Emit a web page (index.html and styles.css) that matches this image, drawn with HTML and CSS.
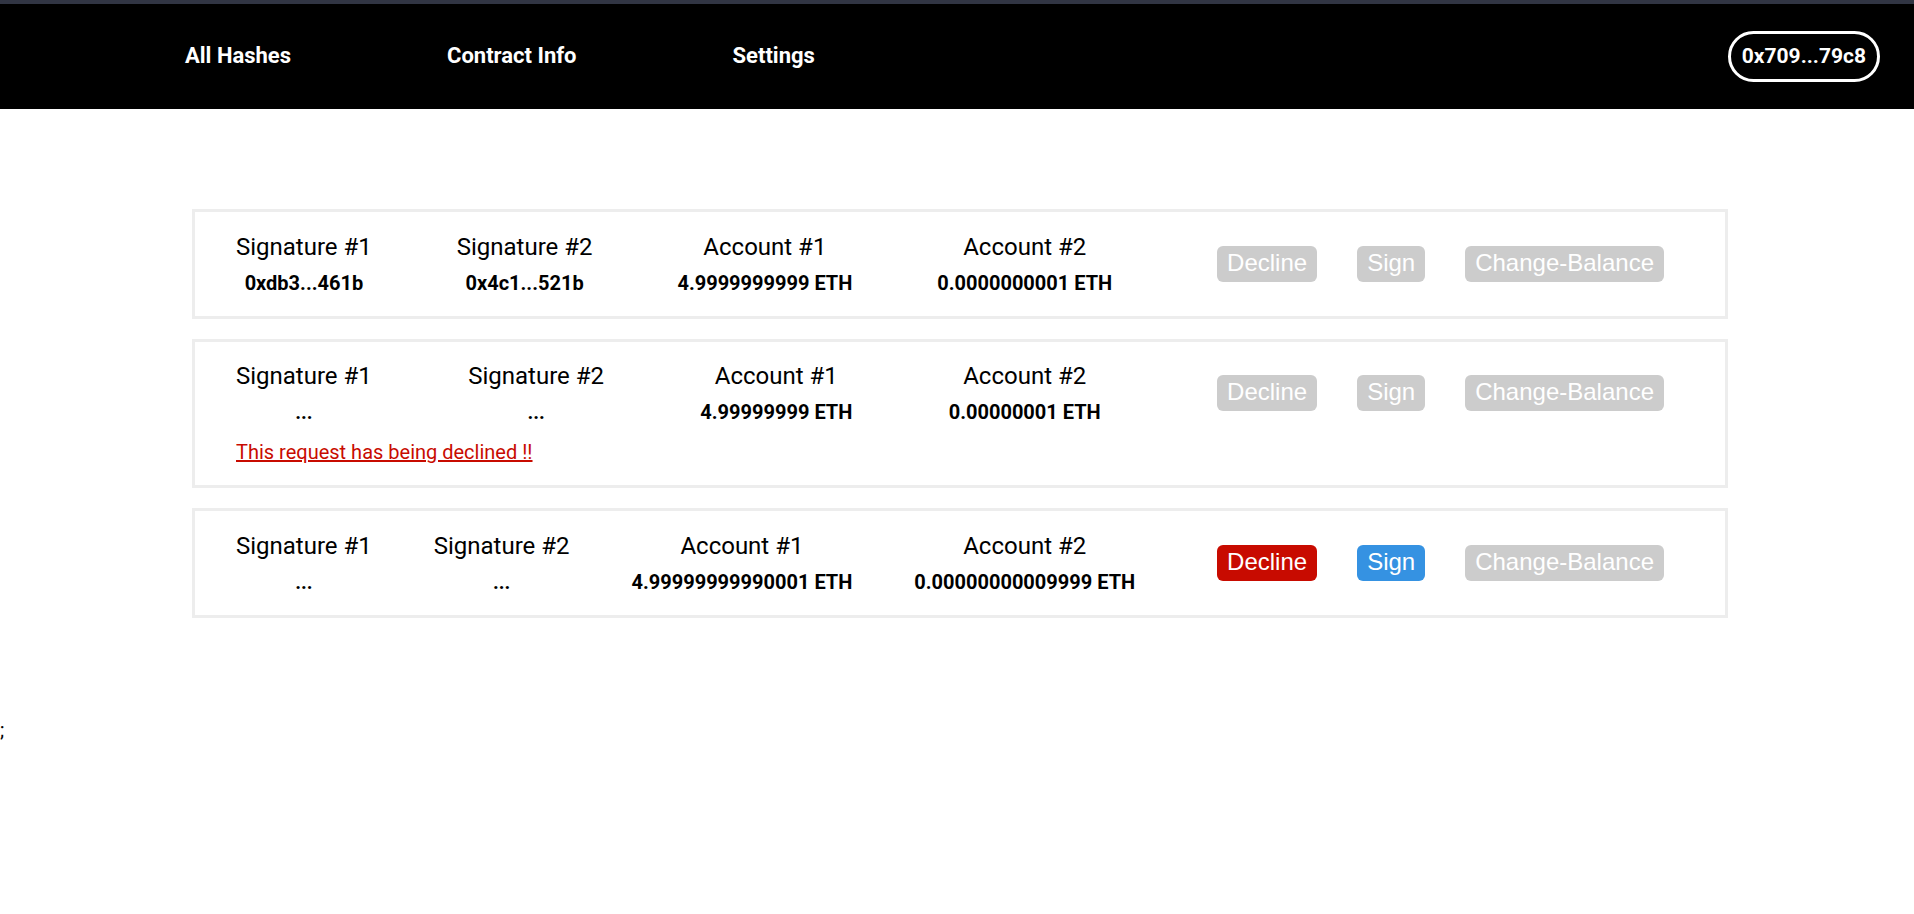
FILE: index.html
```html
<!DOCTYPE html>
<html lang="en">
<head>
<meta charset="utf-8">
<title>All Hashes</title>
<link rel="stylesheet" href="styles.css">
</head>
<body>
<header class="topbar">
  <nav class="nav">
    <a class="nav-link" href="#">All Hashes</a>
    <a class="nav-link" href="#">Contract Info</a>
    <a class="nav-link" href="#">Settings</a>
  </nav>
  <button class="wallet" type="button">0x709...79c8</button>
</header>
<main class="requests">
  <section class="card">
    <div class="row">
      <div class="field"><span class="label">Signature #1</span><strong class="value">0xdb3...461b</strong></div>
      <div class="field"><span class="label">Signature #2</span><strong class="value">0x4c1...521b</strong></div>
      <div class="field"><span class="label">Account #1</span><strong class="value">4.9999999999 ETH</strong></div>
      <div class="field"><span class="label">Account #2</span><strong class="value">0.0000000001 ETH</strong></div>
      <div class="actions">
        <button class="btn decline" type="button" disabled>Decline</button>
        <button class="btn sign" type="button" disabled>Sign</button>
        <button class="btn" type="button" disabled>Change-Balance</button>
      </div>
    </div>
  </section>
  <section class="card declined">
    <div class="row">
      <div class="field"><span class="label">Signature #1</span><strong class="value">...</strong></div>
      <div class="field"><span class="label">Signature #2</span><strong class="value">...</strong></div>
      <div class="field"><span class="label">Account #1</span><strong class="value">4.99999999 ETH</strong></div>
      <div class="field"><span class="label">Account #2</span><strong class="value">0.00000001 ETH</strong></div>
      <div class="actions">
        <button class="btn decline" type="button" disabled>Decline</button>
        <button class="btn sign" type="button" disabled>Sign</button>
        <button class="btn" type="button" disabled>Change-Balance</button>
      </div>
    </div>
    <p class="notice">This request has being declined !!</p>
  </section>
  <section class="card">
    <div class="row">
      <div class="field"><span class="label">Signature #1</span><strong class="value">...</strong></div>
      <div class="field"><span class="label">Signature #2</span><strong class="value">...</strong></div>
      <div class="field"><span class="label">Account #1</span><strong class="value">4.99999999990001 ETH</strong></div>
      <div class="field"><span class="label">Account #2</span><strong class="value">0.00000000009999 ETH</strong></div>
      <div class="actions">
        <button class="btn decline" type="button">Decline</button>
        <button class="btn sign" type="button">Sign</button>
        <button class="btn" type="button" disabled>Change-Balance</button>
      </div>
    </div>
  </section>
</main>
<div class="trailing">;</div>
</body>
</html>
```

FILE: styles.css
```css
body {
  margin: 0;
  background: #fff;
  color: #000;
  font-family: Roboto, sans-serif;
  font-size: 20px;
}

.topbar {
  display: flex;
  align-items: center;
  justify-content: space-between;
  padding: 27px 34px 27px 185px;
  border-top: 4px solid #313543;
  background: #000;
}

.nav {
  display: flex;
  gap: 156px;
  padding-bottom: 2px;
}

.nav-link {
  color: #fff;
  font-size: 22px;
  font-weight: 700;
  line-height: 26px;
  text-decoration: none;
}

.wallet {
  padding: 9px 11px;
  border: 3px solid #fff;
  border-radius: 26px;
  background: transparent;
  color: #fff;
  font-family: inherit;
  font-size: 21px;
  font-weight: 700;
  line-height: 27px;
}

.requests {
  display: flex;
  flex-direction: column;
  gap: 20px;
  padding: 100px 186px 100px 192px;
}

.card {
  border: 3px solid #ededed;
}

.row {
  display: flex;
  align-items: center;
  justify-content: space-between;
  padding: 20px 41px;
}

.declined .row {
  padding-top: 19px;
  padding-bottom: 15px;
}

.field {
  display: flex;
  flex-direction: column;
  align-items: center;
  gap: 9px;
}

.label {
  font-size: 24px;
  line-height: 30px;
}

.value {
  font-size: 20px;
  font-weight: 700;
  line-height: 25px;
}

.actions {
  display: flex;
  gap: 40px;
  padding: 0 20px;
}

.btn {
  padding: 3px 10px 5px;
  border: 0;
  border-radius: 6px;
  background: #3592e2;
  color: #fff;
  font-family: "Liberation Sans", Arial, sans-serif;
  font-size: 24px;
  line-height: 28px;
}

.decline {
  background: #c80b00;
}

.btn:disabled {
  background: #ccc;
}

.notice {
  margin: 0;
  padding: 0 41px 21px;
  color: #c80b00;
  line-height: 24px;
  text-decoration: underline;
}

.trailing {
  line-height: 24px;
}
```
